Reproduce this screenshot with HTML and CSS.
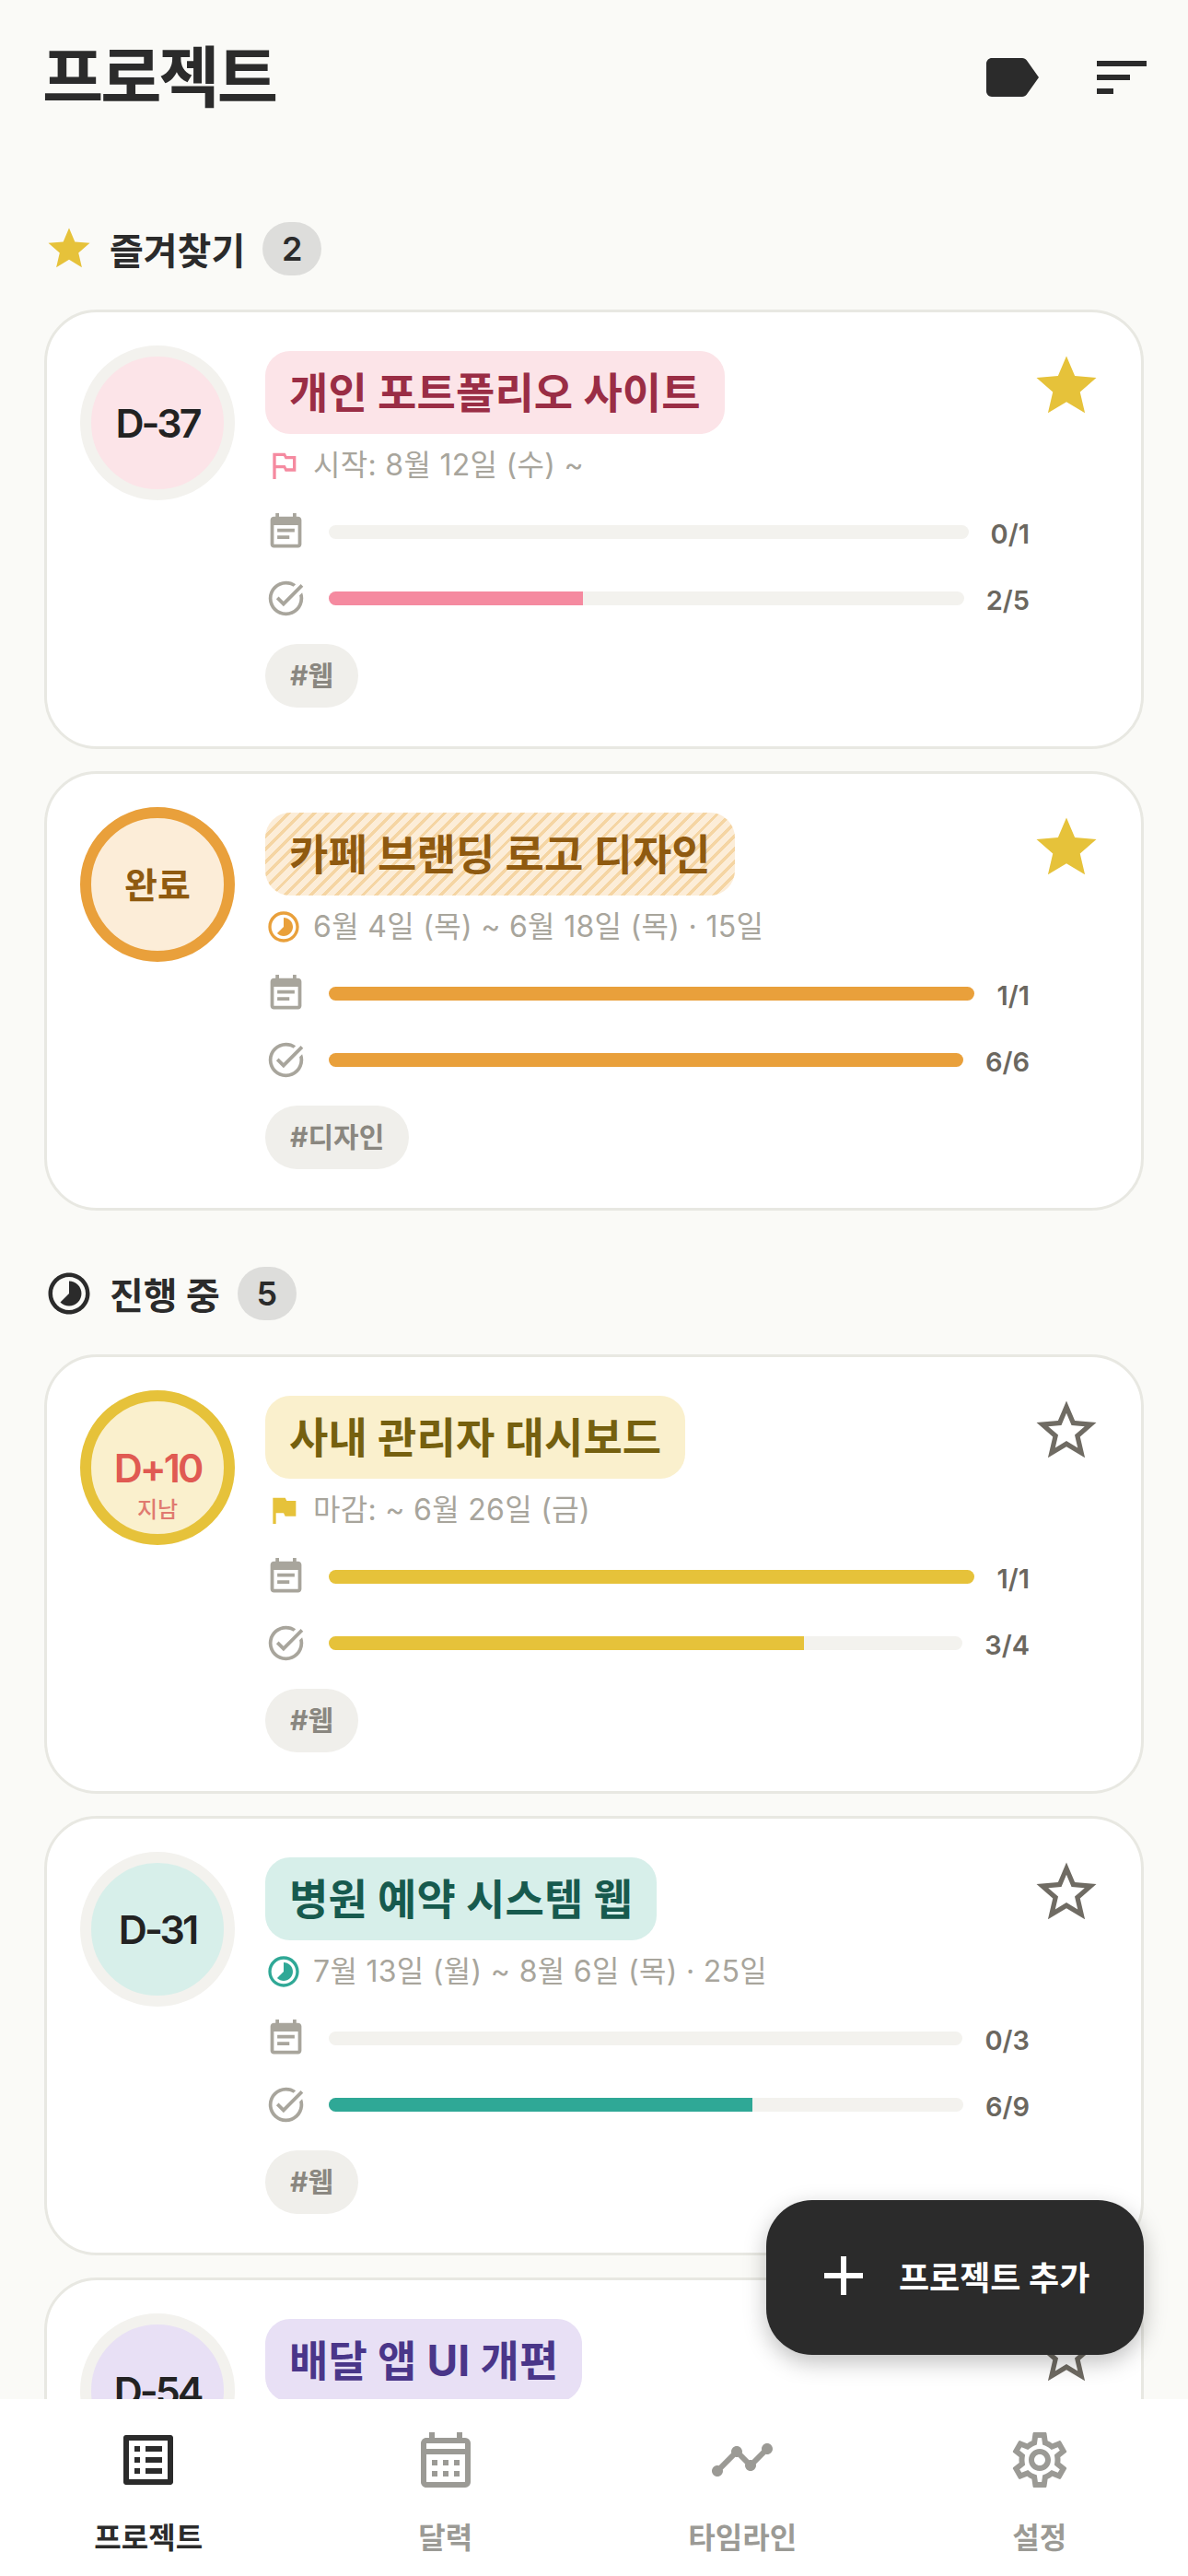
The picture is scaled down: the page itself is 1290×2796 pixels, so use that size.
FILE: index.html
```html
<!DOCTYPE html>
<html lang="ko">
<head>
	<meta charset="utf-8">
	<title>프로젝트</title>
	<link rel="stylesheet" href="styles.css">
</head>
<body>
	<svg class="sprite" xmlns="http://www.w3.org/2000/svg">
		<symbol id="i-label" viewBox="0 0 24 24"><path d="M17.63 5.84C17.27 5.33 16.67 5 16 5L5 5.01C3.9 5.01 3 5.9 3 7v10c0 1.1.9 1.99 2 1.99L16 19c.67 0 1.27-.33 1.63-.84L22 12l-4.37-6.16z"/></symbol>
		<symbol id="i-sort" viewBox="0 0 24 24"><path d="M3 18h6v-2H3v2zM3 6v2h18V6H3zm0 7h12v-2H3v2z"/></symbol>
		<symbol id="i-star" viewBox="0 0 24 24"><path d="M12 17.27L18.18 21l-1.64-7.03L22 9.24l-7.19-.61L12 2 9.19 8.63 2 9.24l5.46 4.73L5.82 21z"/></symbol>
		<symbol id="i-star-o" viewBox="0 0 24 24"><path d="M22 9.24l-7.19-.62L12 2 9.19 8.63 2 9.24l5.46 4.73L5.82 21 12 17.27 18.18 21l-1.63-7.03L22 9.24zM12 15.4l-3.76 2.27 1-4.28-3.32-2.88 4.38-.38L12 6.1l1.71 4.04 4.38.38-3.32 2.88 1 4.28L12 15.4z"/></symbol>
		<symbol id="i-pie" viewBox="0 0 24 24"><path d="M16.24 7.76C15.07 6.59 13.54 6 12 6v6l-4.24 4.24c2.34 2.34 6.14 2.34 8.49 0 2.34-2.34 2.34-6.14-.01-8.48zM12 2C6.48 2 2 6.48 2 12s4.48 10 10 10 10-4.48 10-10S17.52 2 12 2zm0 18c-4.42 0-8-3.58-8-8s3.58-8 8-8 8 3.58 8 8-3.58 8-8 8z"/></symbol>
		<symbol id="i-flag" viewBox="0 0 24 24"><path d="M14 6l-1-2H5v17h2v-7h5l1 2h7V6h-6z"/></symbol>
		<symbol id="i-flag-o" viewBox="0 0 24 24"><path d="M14 6l-1-2H5v17h2v-7h5l1 2h7V6h-6zm4 8h-4l-1-2H7V6h5l1 2h5v6z"/></symbol>
		<symbol id="i-note" viewBox="0 0 24 24"><path d="M17 10H7v2h10v-2zm2-7h-1V1h-2v2H8V1H6v2H5c-1.11 0-1.99.9-1.99 2L3 19c0 1.1.89 2 2 2h14c1.1 0 2-.9 2-2V5c0-1.1-.9-2-2-2zm0 16H5V8h14v11zm-5-5H7v2h7v-2z"/></symbol>
		<symbol id="i-check" viewBox="0 0 24 24"><path d="M22 5.18L10.59 16.6l-4.24-4.24 1.41-1.41 2.83 2.83 10-10L22 5.18zm-2.21 5.04c.13.57.21 1.17.21 1.78 0 4.42-3.58 8-8 8s-8-3.58-8-8 3.58-8 8-8c1.58 0 3.04.46 4.28 1.25l1.44-1.44A9.9 9.9 0 0 0 12 2C6.48 2 2 6.48 2 12s4.48 10 10 10 10-4.48 10-10c0-1.19-.22-2.33-.6-3.39l-1.61 1.61z"/></symbol>
		<symbol id="i-list" viewBox="0 0 24 24"><path d="M19 5v14H5V5h14m1.1-2H3.9c-.5 0-.9.4-.9.9v16.2c0 .4.4.9.9.9h16.2c.4 0 .9-.5.9-.9V3.9c0-.5-.5-.9-.9-.9zM11 7h6v2h-6V7zm0 4h6v2h-6v-2zm0 4h6v2h-6zM7 7h2v2H7zm0 4h2v2H7zm0 4h2v2H7z"/></symbol>
		<symbol id="i-calendar" viewBox="0 0 24 24"><path d="M19 4h-1V2h-2v2H8V2H6v2H5c-1.1 0-2 .9-2 2v14c0 1.1.9 2 2 2h14c1.1 0 2-.9 2-2V6c0-1.1-.9-2-2-2zm0 16H5V10h14v10zM19 8H5V6h14v2zM9 14H7v-2h2v2zm4 0h-2v-2h2v2zm4 0h-2v-2h2v2zm-8 4H7v-2h2v2zm4 0h-2v-2h2v2zm4 0h-2v-2h2v2z"/></symbol>
		<symbol id="i-timeline" viewBox="0 0 24 24"><path d="M23 8c0 1.1-.9 2-2 2-.18 0-.35-.02-.51-.07l-3.56 3.55c.05.16.07.34.07.52 0 1.1-.9 2-2 2s-2-.9-2-2c0-.18.02-.36.07-.52l-2.55-2.55c-.16.05-.34.07-.52.07s-.36-.02-.52-.07l-4.55 4.56c.05.16.07.33.07.51 0 1.1-.9 2-2 2s-2-.9-2-2 .9-2 2-2c.18 0 .35.02.51.07l4.56-4.55C8.02 9.36 8 9.18 8 9c0-1.1.9-2 2-2s2 .9 2 2c0 .18-.02.36-.07.52l2.55 2.55c.16-.05.34-.07.52-.07s.36.02.52.07l3.55-3.56C19.02 8.35 19 8.18 19 8c0-1.1.9-2 2-2s2 .9 2 2z"/></symbol>
		<symbol id="i-settings" viewBox="0 0 24 24"><path d="M19.43 12.98c.04-.32.07-.64.07-.98 0-.34-.03-.66-.07-.98l2.11-1.65c.19-.15.24-.42.12-.64l-2-3.46c-.09-.16-.26-.25-.44-.25-.06 0-.12.01-.17.03l-2.49 1c-.52-.4-1.08-.73-1.69-.98l-.38-2.65C14.46 2.18 14.25 2 14 2h-4c-.25 0-.46.18-.49.42l-.38 2.65c-.61.25-1.17.59-1.69.98l-2.49-1c-.06-.02-.12-.03-.18-.03-.17 0-.34.09-.43.25l-2 3.46c-.13.22-.07.49.12.64l2.11 1.65c-.04.32-.07.65-.07.98 0 .33.03.66.07.98l-2.11 1.65c-.19.15-.24.42-.12.64l2 3.46c.09.16.26.25.44.25.06 0 .12-.01.17-.03l2.49-1c.52.4 1.08.73 1.69.98l.38 2.65c.03.24.24.42.49.42h4c.25 0 .46-.18.49-.42l.38-2.65c.61-.25 1.17-.59 1.69-.98l2.49 1c.06.02.12.03.18.03.17 0 .34-.09.43-.25l2-3.46c.12-.22.07-.49-.12-.64l-2.11-1.65zm-1.98-1.71c.04.31.05.52.05.73 0 .21-.02.43-.05.73l-.14 1.13.89.7 1.08.84-.7 1.21-1.27-.51-1.04-.42-.9.68c-.43.32-.84.56-1.25.73l-1.06.43-.16 1.13-.2 1.35h-1.4l-.19-1.35-.16-1.13-1.06-.43c-.43-.18-.83-.41-1.23-.71l-.91-.7-1.06.43-1.27.51-.7-1.21 1.08-.84.89-.7-.14-1.13c-.03-.31-.05-.54-.05-.74s.02-.43.05-.73l.14-1.13-.89-.7-1.08-.84.7-1.21 1.27.51 1.04.42.9-.68c.43-.32.84-.56 1.25-.73l1.06-.43.16-1.13.2-1.35h1.39l.19 1.35.16 1.13 1.06.43c.43.18.83.41 1.23.71l.91.7 1.06-.43 1.27-.51.7 1.21-1.07.85-.89.7.14 1.13zM12 8c-2.21 0-4 1.79-4 4s1.79 4 4 4 4-1.79 4-4-1.79-4-4-4zm0 6c-1.1 0-2-.9-2-2s.9-2 2-2 2 .9 2 2-.9 2-2 2z"/></symbol>
		<symbol id="i-plus" viewBox="0 0 24 24"><path d="M19 13h-6v6h-2v-6H5v-2h6V5h2v6h6v2z"/></symbol>
	</svg>

	<div class="app">
		<main class="scroll">
			<header class="topbar">
				<h1>프로젝트</h1>
				<div class="topbar-icons">
					<svg class="icon-72"><use href="#i-label"/></svg>
					<svg class="icon-72"><use href="#i-sort"/></svg>
				</div>
			</header>

			<section class="group group-first">
				<h2 class="group-head">
					<svg class="icon-54 c-star"><use href="#i-star"/></svg>
					<span>즐겨찾기</span>
					<span class="count">2</span>
				</h2>

				<article class="card pink">
					<div class="dday"><span class="dday-num">D-37</span></div>
					<div class="main">
						<div class="title"><span>개인 포트폴리오 사이트</span></div>
						<div class="meta"><svg class="icon-40 accent"><use href="#i-flag-o"/></svg>시작: 8월 12일 (수) ~</div>
						<div class="row">
							<svg class="icon-45"><use href="#i-note"/></svg>
							<div class="bar"></div>
							<span class="ratio">0/1</span>
						</div>
						<div class="row">
							<svg class="icon-45"><use href="#i-check"/></svg>
							<div class="bar"><div class="fill" style="width: 40%"></div></div>
							<span class="ratio">2/5</span>
						</div>
						<div class="tags"><span class="tag">#웹</span></div>
					</div>
					<svg class="star c-star"><use href="#i-star"/></svg>
				</article>

				<article class="card orange">
					<div class="dday done"><span class="dday-done">완료</span></div>
					<div class="main">
						<div class="title striped"><span>카페 브랜딩 로고 디자인</span></div>
						<div class="meta"><svg class="icon-40 accent"><use href="#i-pie"/></svg>6월 4일 (목) ~ 6월 18일 (목) · 15일</div>
						<div class="row">
							<svg class="icon-45"><use href="#i-note"/></svg>
							<div class="bar"><div class="fill" style="width: 100%"></div></div>
							<span class="ratio">1/1</span>
						</div>
						<div class="row">
							<svg class="icon-45"><use href="#i-check"/></svg>
							<div class="bar"><div class="fill" style="width: 100%"></div></div>
							<span class="ratio">6/6</span>
						</div>
						<div class="tags"><span class="tag">#디자인</span></div>
					</div>
					<svg class="star c-star"><use href="#i-star"/></svg>
				</article>
			</section>

			<section class="group">
				<h2 class="group-head">
					<svg class="icon-54"><use href="#i-pie"/></svg>
					<span>진행 중</span>
					<span class="count">5</span>
				</h2>

				<article class="card yellow">
					<div class="dday done has-sub">
						<span class="dday-num late">D+10</span>
						<span class="dday-sub">지남</span>
					</div>
					<div class="main">
						<div class="title"><span>사내 관리자 대시보드</span></div>
						<div class="meta"><svg class="icon-40 accent"><use href="#i-flag"/></svg>마감: ~ 6월 26일 (금)</div>
						<div class="row">
							<svg class="icon-45"><use href="#i-note"/></svg>
							<div class="bar"><div class="fill" style="width: 100%"></div></div>
							<span class="ratio">1/1</span>
						</div>
						<div class="row">
							<svg class="icon-45"><use href="#i-check"/></svg>
							<div class="bar"><div class="fill" style="width: 75%"></div></div>
							<span class="ratio">3/4</span>
						</div>
						<div class="tags"><span class="tag">#웹</span></div>
					</div>
					<svg class="star c-off"><use href="#i-star-o"/></svg>
				</article>

				<article class="card teal">
					<div class="dday"><span class="dday-num">D-31</span></div>
					<div class="main">
						<div class="title"><span>병원 예약 시스템 웹</span></div>
						<div class="meta"><svg class="icon-40 accent"><use href="#i-pie"/></svg>7월 13일 (월) ~ 8월 6일 (목) · 25일</div>
						<div class="row">
							<svg class="icon-45"><use href="#i-note"/></svg>
							<div class="bar"></div>
							<span class="ratio">0/3</span>
						</div>
						<div class="row">
							<svg class="icon-45"><use href="#i-check"/></svg>
							<div class="bar"><div class="fill" style="width: 66.7%"></div></div>
							<span class="ratio">6/9</span>
						</div>
						<div class="tags"><span class="tag">#웹</span></div>
					</div>
					<svg class="star c-off"><use href="#i-star-o"/></svg>
				</article>

				<article class="card purple">
					<div class="dday"><span class="dday-num">D-54</span></div>
					<div class="main">
						<div class="title"><span>배달 앱 UI 개편</span></div>
					</div>
					<svg class="star c-off"><use href="#i-star-o"/></svg>
				</article>
			</section>
		</main>

		<button class="fab" type="button">
			<svg class="icon-72"><use href="#i-plus"/></svg>
			<span>프로젝트 추가</span>
		</button>

		<nav class="tabs">
			<a class="tab is-active"><svg class="icon-72"><use href="#i-list"/></svg><span>프로젝트</span></a>
			<a class="tab"><svg class="icon-72"><use href="#i-calendar"/></svg><span>달력</span></a>
			<a class="tab"><svg class="icon-72"><use href="#i-timeline"/></svg><span>타임라인</span></a>
			<a class="tab"><svg class="icon-72"><use href="#i-settings"/></svg><span>설정</span></a>
		</nav>
	</div>
</body>
</html>
```

FILE: styles.css
```css
* {
	box-sizing: border-box;
}

html, body {
	margin: 0;
	padding: 0;
}

body {
	background: #fafaf7;
	color: #2b2b2b;
	font-family: Inter, "Noto Sans CJK KR", sans-serif;
}

svg {
	display: block;
	flex: none;
	fill: currentColor;
}

.sprite {
	display: none;
}

.app {
	position: relative;
	display: flex;
	flex-direction: column;
	width: 1290px;
	height: 2796px;
	overflow: hidden;
}

.scroll {
	flex: 1;
	min-height: 0;
	overflow: hidden;
}

.icon-72 { width: 72px; height: 72px; }
.icon-54 { width: 54px; height: 54px; }
.icon-45 { width: 45px; height: 45px; color: #a8a59c; }
.icon-40 { width: 40px; height: 40px; }

.c-star { color: #e6c23a; }
.c-off { color: #6f6b63; }

/* header */
.topbar {
	display: flex;
	align-items: center;
	justify-content: space-between;
	height: 72px;
	margin-top: 48px;
	padding: 0 36px 0 46px;
}

.topbar h1 {
	margin: 0;
	font-size: 72px;
	font-weight: 700;
	letter-spacing: -3px;
	line-height: 72px;
}

.topbar-icons {
	display: flex;
	gap: 48px;
}

/* sections */
.group {
	padding: 0 48px;
	margin-top: 61px;
}

.group-first {
	margin-top: 121px;
}

.group-head {
	display: flex;
	align-items: center;
	height: 58px;
	margin: 0 0 37px;
	font-size: 40px;
	font-weight: 700;
}

.group-head > span:first-of-type {
	margin-left: 17px;
}

.count {
	width: 64px;
	height: 58px;
	margin-left: 19px;
	border-radius: 29px;
	background: #dddddb;
	font-size: 36px;
	font-weight: 600;
	line-height: 58px;
	text-align: center;
}

/* cards */
.card {
	display: flex;
	align-items: flex-start;
	height: 477px;
	margin-bottom: 24px;
	padding: 36px;
	background: #fff;
	border: solid 3px #e8e8e2;
	border-radius: 57px;
}

.card.pink { --soft: #fce4e8; --ink: #9a2d45; --accent: #f58aa0; }
.card.orange { --soft: #fcedd8; --ink: #8f5a10; --accent: #e9a03b; }
.card.yellow { --soft: #faf0cd; --ink: #75600f; --accent: #e6c23a; }
.card.teal { --soft: #d7efea; --ink: #175a4e; --accent: #2fa896; }
.card.purple { --soft: #e8e0f5; --ink: #4a3689; --accent: #8a6fd0; }

.dday {
	display: flex;
	flex: none;
	flex-direction: column;
	align-items: center;
	justify-content: center;
	width: 168px;
	height: 168px;
	margin-right: 33px;
	background: var(--soft);
	border: solid 12px #f3f2ee;
	border-radius: 50%;
}

.dday.done {
	border-color: var(--accent);
}

.dday.has-sub {
	justify-content: flex-start;
	padding-top: 46px;
}

.dday-num {
	font-size: 43px;
	font-weight: 600;
	letter-spacing: -3px;
	line-height: 52px;
	color: #222;
}

.dday-num.late {
	color: #e05a52;
}

.dday-sub {
	margin-top: 6px;
	font-size: 24px;
	font-weight: 500;
	line-height: 28px;
	color: #e07a70;
}

.dday-done {
	margin-bottom: 5px;
	font-size: 39px;
	font-weight: 700;
	color: var(--ink);
}

.main {
	flex: 1;
	min-width: 0;
	padding-top: 6px;
}

.title {
	display: table;
	height: 90px;
	padding: 15px 26px;
	border-radius: 27px;
	background: var(--soft);
	color: var(--ink);
	font-size: 46px;
	font-weight: 700;
	letter-spacing: 0.15px;
	line-height: 60px;
}

.title.striped {
	background: repeating-linear-gradient(135deg, #fcedd8 0, #fcedd8 6.5px, #f5d5a3 6.5px, #f5d5a3 10px);
}

.meta {
	display: flex;
	align-items: center;
	gap: 12px;
	height: 44px;
	margin: 12px 0 28px;
	color: #a8a59c;
	font-size: 32px;
	letter-spacing: 0.3px;
	line-height: 44px;
}

.accent {
	color: var(--accent);
}

.row {
	display: flex;
	align-items: center;
	gap: 24px;
	height: 45px;
	margin-bottom: 27px;
}

.bar {
	flex: 1;
	height: 15px;
	overflow: hidden;
	background: #f3f2ee;
	border-radius: 8px;
}

.fill {
	height: 100%;
	background: var(--accent);
}

.ratio {
	padding-top: 4px;
	color: #6b675f;
	font-size: 29px;
	font-weight: 600;
	text-align: right;
}

.tags {
	display: flex;
	gap: 12px;
}

.tag {
	height: 69px;
	padding: 0 27px;
	border-radius: 35px;
	background: #f0efeb;
	color: #8a8780;
	font-size: 30px;
	font-weight: 700;
	line-height: 69px;
}

.star {
	width: 78px;
	height: 78px;
	margin: 5px 6px 0 1px;
}

/* floating button */
.fab {
	position: absolute;
	right: 48px;
	bottom: 240px;
	display: flex;
	align-items: center;
	gap: 24px;
	width: 410px;
	height: 168px;
	padding: 0 0 4px 48px;
	border: none;
	border-radius: 50px;
	background: #2b2b2b;
	box-shadow: 0 8px 24px rgba(0,0,0,0.25);
	color: #fff;
	font-family: inherit;
	font-size: 36px;
	font-weight: 700;
}

/* bottom tabs */
.tabs {
	display: grid;
	flex: none;
	grid-template-columns: repeat(4, 1fr);
	height: 192px;
	background: #fff;
}

.tab {
	display: flex;
	flex-direction: column;
	align-items: center;
	padding-top: 30px;
	color: #9b9a95;
	font-size: 32px;
	font-weight: 600;
	line-height: 44px;
}

.tab span {
	margin-top: 27px;
}

.tab.is-active {
	color: #2b2b2b;
	font-weight: 700;
}
```
